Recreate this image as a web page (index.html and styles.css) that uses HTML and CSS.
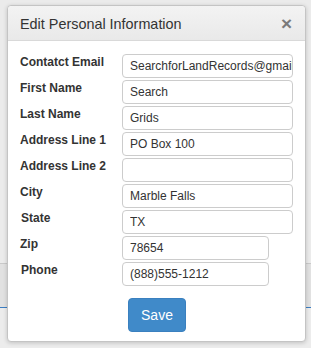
FILE: index.html
```html
<!DOCTYPE html>
<html>
<head>
<meta charset="utf-8">
<link rel="stylesheet" href="styles.css">
</head>
<body>
<div class="page">
  <div class="page-top"></div>
  <div class="page-band"></div>
  <div class="page-bottom"></div>
</div>
<div class="modal">
  <div class="modal-header">
    <span class="modal-title">Edit Personal Information</span>
    <span class="close">&times;</span>
  </div>
  <div class="modal-body">
    <form class="form">
      <label class="lbl">Contatct Email</label>
      <input class="inp" type="text" value="SearchforLandRecords@gmail.com">
      <label class="lbl">First Name</label>
      <input class="inp" type="text" value="Search">
      <label class="lbl">Last Name</label>
      <input class="inp" type="text" value="Grids">
      <label class="lbl">Address Line 1</label>
      <input class="inp" type="text" value="PO Box 100">
      <label class="lbl">Address Line 2</label>
      <input class="inp" type="text" value="">
      <label class="lbl">City</label>
      <input class="inp" type="text" value="Marble Falls">
      <label class="lbl lbl-shift">State</label>
      <input class="inp" type="text" value="TX">
      <label class="lbl">Zip</label>
      <input class="inp inp-short" type="text" value="78654">
      <label class="lbl lbl-shift">Phone</label>
      <input class="inp inp-short" type="text" value="(888)555-1212">
    </form>
    <div class="actions">
      <button class="btn" type="button">Save</button>
    </div>
  </div>
</div>
</body>
</html>
```

FILE: styles.css
```css
html, body {
  margin: 0;
  padding: 0;
}
body {
  width: 311px;
  height: 348px;
  overflow: hidden;
  background: #ebebeb;
  font-family: "Liberation Sans", Arial, sans-serif;
  color: #333;
  position: relative;
}
.page {
  display: flex;
  flex-direction: column;
}
.page-top {
  height: 263px;
  border-bottom: 1px solid #c9c9c9;
  background: #ebebeb;
}
.page-band {
  height: 43px;
  background: #e1e1e1;
  border-bottom: 1px solid #3b7dc2;
}
.page-bottom {
  height: 40px;
  background: #ececec;
}
.modal {
  position: absolute;
  left: 7px;
  top: 5px;
  width: 297px;
  height: 335px;
  background: #fff;
  border: 1px solid #c4c4c4;
  border-radius: 4px;
  box-shadow: 0 1px 4px rgba(0, 0, 0, 0.18);
  display: flex;
  flex-direction: column;
}
.modal-header {
  height: 34px;
  border-bottom: 1px solid #d9d9d9;
  background: linear-gradient(#f3f3f3, #e9e9e9);
  border-radius: 4px 4px 0 0;
  display: flex;
  align-items: center;
  justify-content: space-between;
  padding: 0 12px;
}
.modal-title {
  font-size: 14.4px;
  color: #333;
  margin-top: 1px;
}
.close {
  font-size: 19px;
  font-weight: bold;
  color: #7a7a7a;
  line-height: 1;
  margin-right: 1px;
}
.modal-body {
  padding: 13px 12px 0 12px;
  display: flex;
  flex-direction: column;
}
.form {
  display: grid;
  grid-template-columns: 102px 171px;
  row-gap: 2px;
  margin: 0;
}
.lbl {
  font-size: 12px;
  font-weight: bold;
  line-height: 14px;
  padding-top: 1px;
  color: #333;
}
.lbl-shift {
  padding-left: 1px;
}
.inp {
  box-sizing: border-box;
  height: 24px;
  width: 171px;
  margin: 0;
  border: 1px solid #cccccc;
  border-radius: 4px;
  padding: 0 0 0 7px;
  font-family: "Liberation Sans", Arial, sans-serif;
  font-size: 12px;
  color: #333;
  background: #fff;
  outline: none;
}
.inp-short {
  width: 147px;
}
.actions {
  display: flex;
  justify-content: center;
  padding-top: 12px;
  padding-left: 1px;
}
.btn {
  width: 58px;
  height: 34px;
  border: 1px solid #3a80bf;
  border-radius: 4px;
  background: #408ac9;
  color: #fff;
  font-family: "Liberation Sans", Arial, sans-serif;
  font-size: 14px;
  padding: 0;
}
```
